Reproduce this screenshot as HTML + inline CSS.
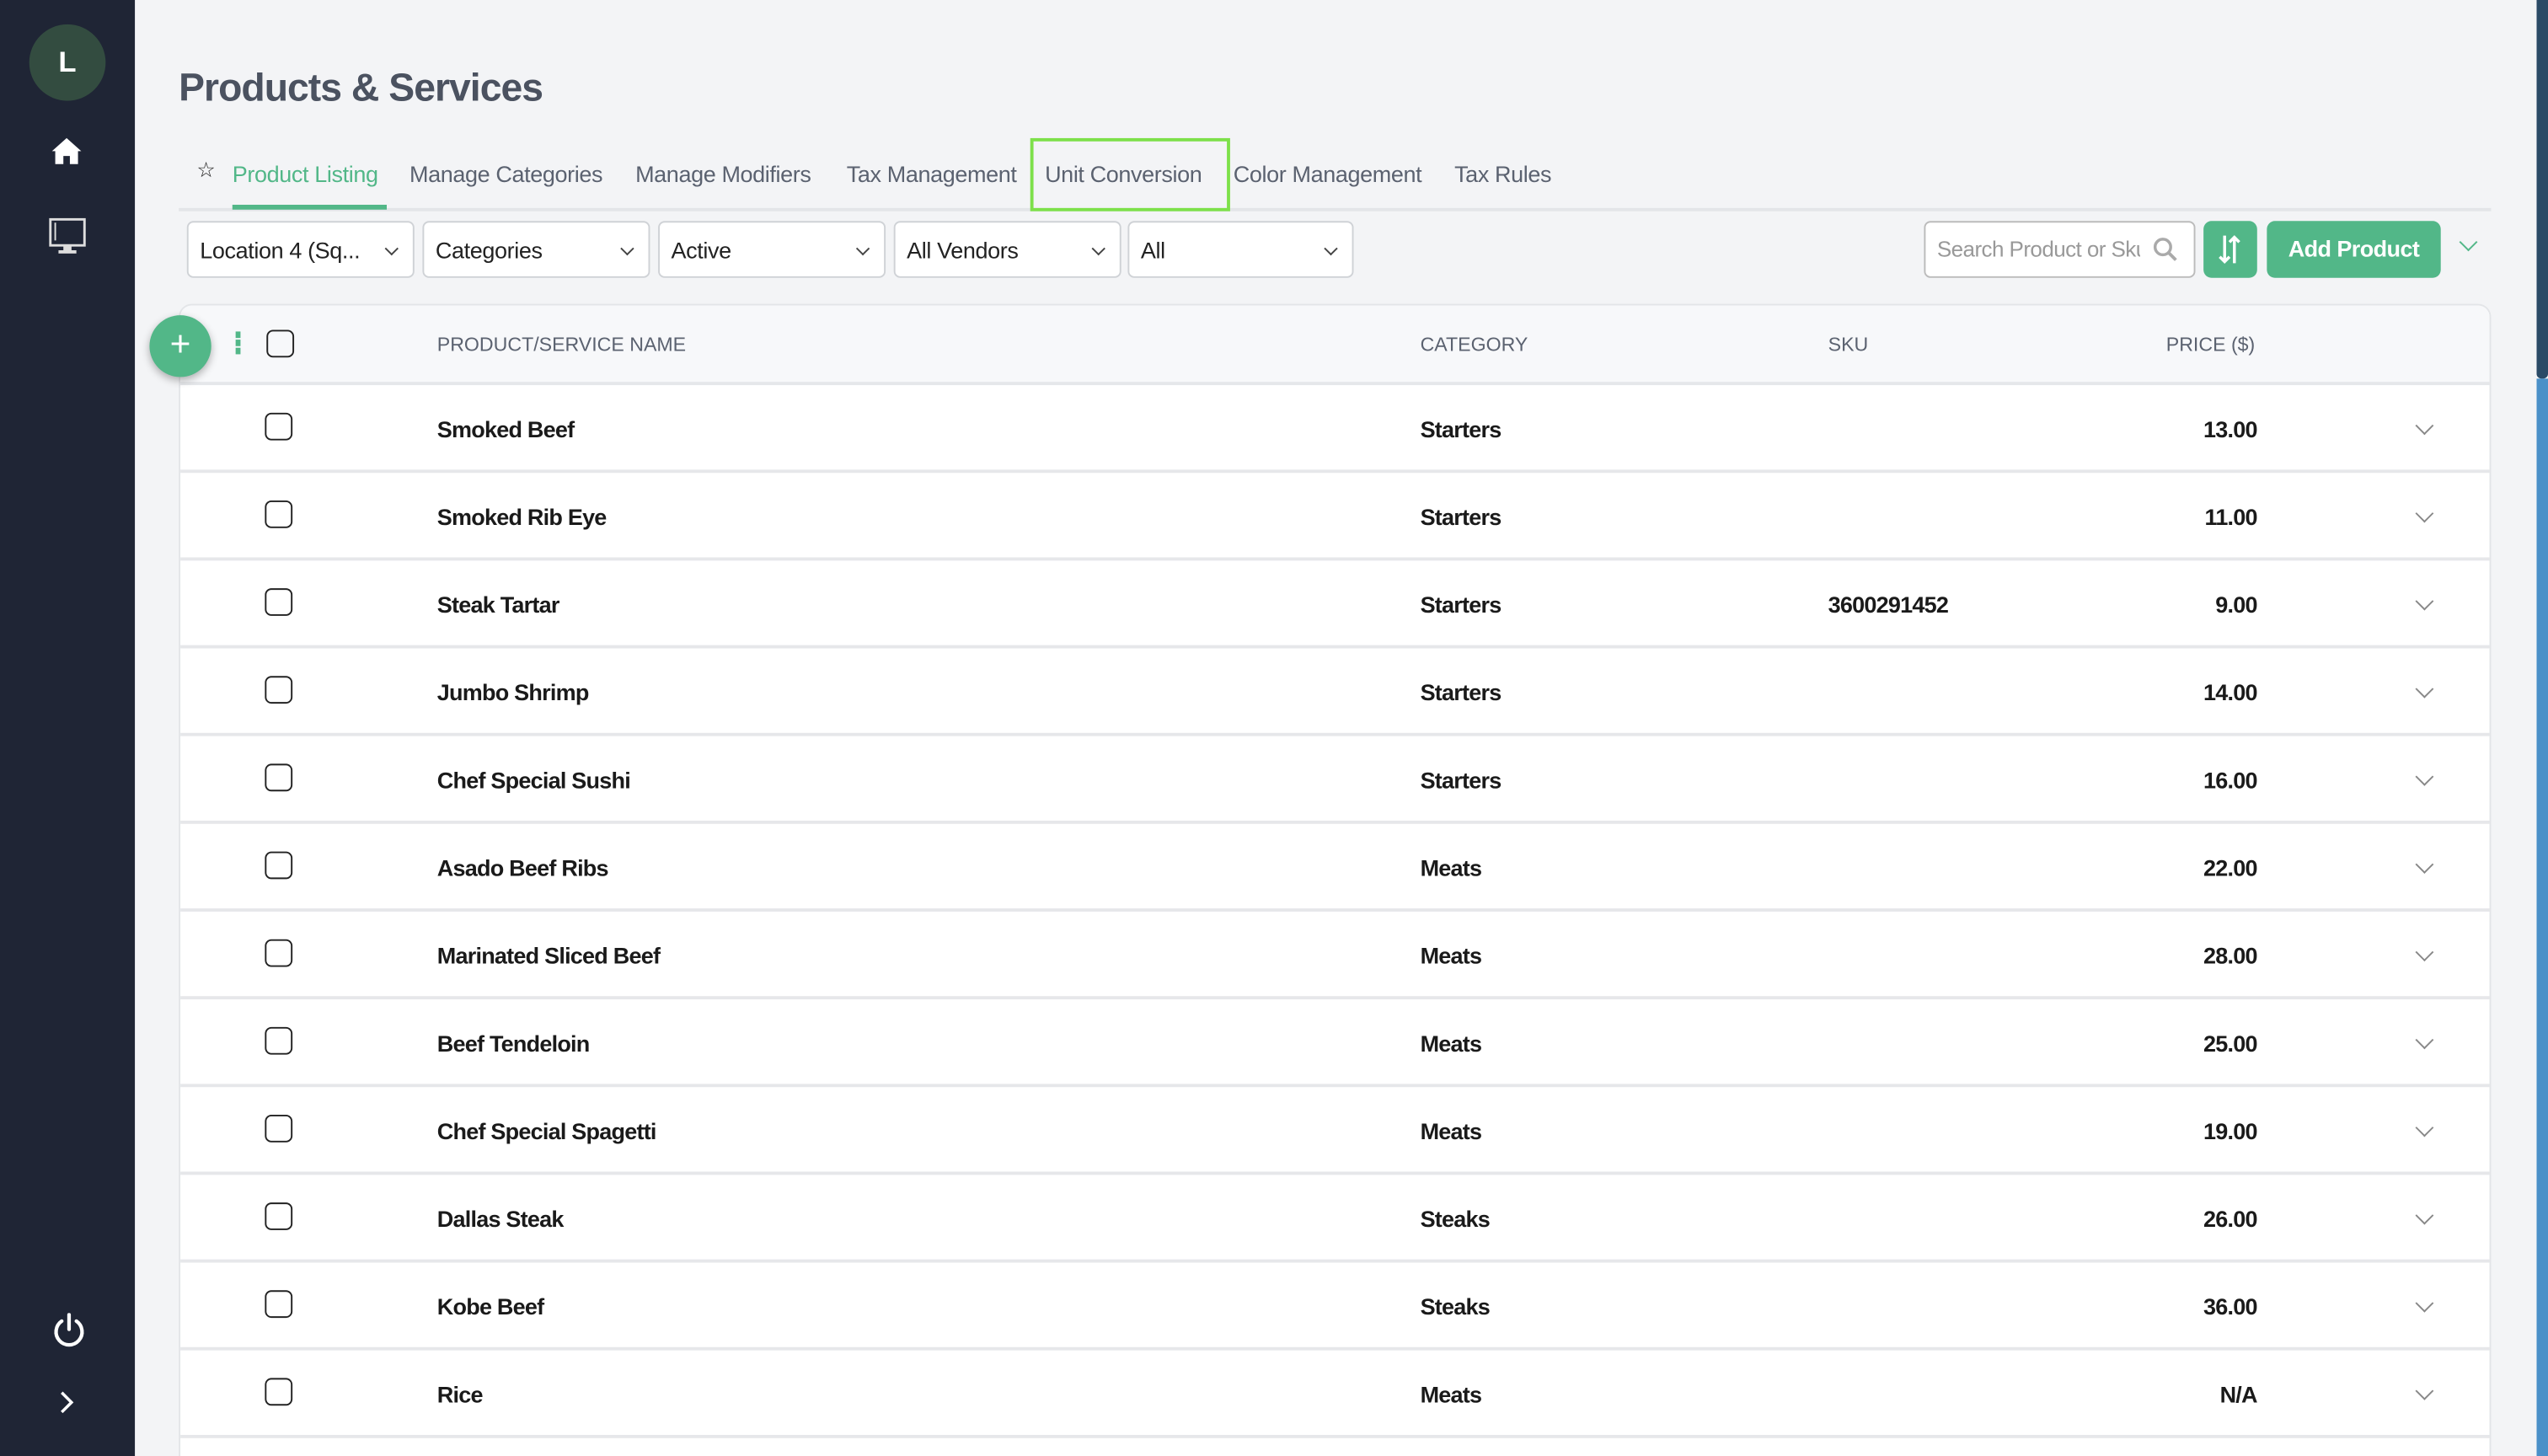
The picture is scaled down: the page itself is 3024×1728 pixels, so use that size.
<!DOCTYPE html>
<html><head><meta charset="utf-8"><style>
*{box-sizing:border-box;margin:0;padding:0}
html,body{width:3024px;height:1728px;overflow:hidden;background:#f3f4f6}
#w{position:absolute;left:0;top:0;width:1568px;height:896px;overflow:hidden;transform:scale(1.928571);transform-origin:0 0;font-family:"Liberation Sans",sans-serif;background:#f3f4f6}
.sb{position:absolute;left:0;top:0;width:83px;height:896px;background:#1f2535}
.av{position:absolute;left:18px;top:15px;width:47px;height:47px;border-radius:50%;background:#334c40;color:#fff;font-size:18px;font-weight:bold;text-align:center;line-height:47px}
h1{position:absolute;left:110px;top:41px;font-size:24px;color:#4b5260;font-weight:bold;letter-spacing:-0.5px}
.tabs{position:absolute;left:110px;top:96px;width:1423px;height:34px;border-bottom:2px solid #e3e5e8;font-size:14px;color:#5b6270;letter-spacing:-0.2px}
.tabs span{position:absolute;top:3px}
.sel{position:absolute;top:136px;height:35px;background:#fff;border:1px solid #cfd2d6;border-radius:4px;font-size:14px;color:#222;padding:9px 7px;letter-spacing:-0.2px}
.sel:after{content:"";position:absolute;right:10px;top:13px;width:5px;height:5px;border-right:1.3px solid #444;border-bottom:1.3px solid #444;transform:rotate(45deg)}
.tbl{position:absolute;left:110px;top:187px;width:1423px;height:720px;background:#fff;border:1px solid #e3e5e8;border-radius:8px 8px 0 0;overflow:hidden}
.hd{height:49px;background:#f7f8fa;border-bottom:2px solid #e5e7ea;position:relative;font-size:12px;color:#5b6270}
.hd span,.r span{position:absolute}
.r{height:54px;border-bottom:2px solid #e6e7ea;position:relative;font-size:14px;color:#1a1a1a;font-weight:bold;letter-spacing:-0.4px}
.cb{position:absolute;left:52px;width:17px;height:17px;border:1.5px solid #222;border-radius:4px}
.ch{position:absolute;left:1377px;top:21px;width:8px;height:8px;border-right:1.4px solid #888;border-bottom:1.4px solid #888;transform:rotate(45deg)}
</style></head><body><div id="w">
<div class="sb">
<div class="av">L</div>
<svg style="position:absolute;left:31px;top:84px" width="20" height="18" viewBox="0 0 20 18"><path d="M10 1 L1 9 L3 9 L3 17 L8 17 L8 12 L12 12 L12 17 L17 17 L17 9 L19 9 Z" fill="#fff"/></svg>
<svg style="position:absolute;left:30px;top:134px" width="23" height="24" viewBox="0 0 23 24"><rect x="1" y="1" width="21" height="16" fill="none" stroke="#ddd" stroke-width="1.5"/><line x1="4" y1="3" x2="4" y2="14" stroke="#ddd"/><rect x="9" y="17" width="5" height="3" fill="#ddd"/><rect x="6" y="20" width="11" height="2" fill="#ddd"/></svg>
<svg style="position:absolute;left:32px;top:808px" width="21" height="22" viewBox="0 0 21 22"><path d="M6 5 A8 8 0 1 0 15 5" fill="none" stroke="#fff" stroke-width="2.2" stroke-linecap="round"/><line x1="10.5" y1="1" x2="10.5" y2="10" stroke="#fff" stroke-width="2.2" stroke-linecap="round"/></svg>
<svg style="position:absolute;left:36px;top:856px" width="10" height="14" viewBox="0 0 10 14"><path d="M2 1 L8 7 L2 13" fill="none" stroke="#fff" stroke-width="1.8"/></svg>
</div>
<div style="position:absolute;right:0;top:0;width:7px;height:233px;background:#2a4a66;border-radius:0 0 3px 3px"></div>
<div style="position:absolute;right:0;top:233px;width:7px;height:663px;background:#4a90c8"></div>
<h1>Products &amp; Services</h1>
<div class="tabs">
<span style="left:11px;color:#222;font-size:13px;top:1px">☆</span>
<span style="left:33px;color:#52b788">Product Listing</span>
<div style="position:absolute;left:33px;top:30px;width:95px;height:3px;background:#52b788"></div>
<span style="left:142px">Manage Categories</span>
<span style="left:281px">Manage Modifiers</span>
<span style="left:411px">Tax Management</span>
<div style="position:absolute;left:524px;top:-11px;width:123px;height:45px;border:2px solid #7de04a"></div>
<span style="left:533px">Unit Conversion</span>
<span style="left:649px">Color Management</span>
<span style="left:785px">Tax Rules</span>
</div>
<div class="sel" style="left:115px;width:140px">Location 4 (Sq...</div>
<div class="sel" style="left:260px;width:140px">Categories</div>
<div class="sel" style="left:405px;width:140px">Active</div>
<div class="sel" style="left:550px;width:140px">All Vendors</div>
<div class="sel" style="left:694px;width:139px">All</div>
<div style="position:absolute;left:1184px;top:136px;width:167px;height:35px;background:#fff;border:1px solid #bbb;border-radius:4px;font-size:13.5px;color:#999;padding:9px 7px;overflow:hidden;white-space:nowrap;letter-spacing:-0.3px"><div style="width:125px;overflow:hidden">Search Product or Sku</div></div>
<svg style="position:absolute;left:1325px;top:146px" width="15" height="15" viewBox="0 0 15 15"><circle cx="6" cy="6" r="4.8" fill="none" stroke="#aaa" stroke-width="1.8"/><line x1="9.5" y1="9.5" x2="14" y2="14" stroke="#aaa" stroke-width="2"/></svg>
<div style="position:absolute;left:1356px;top:136px;width:33px;height:35px;background:#52b788;border-radius:5px"></div>
<svg style="position:absolute;left:1364px;top:144px" width="16" height="19" viewBox="0 0 16 19"><path d="M5 1 V17 M2 14 L5 17 L8 14 M11 18 V2 M8 5 L11 2 L14 5" fill="none" stroke="#fff" stroke-width="1.8"/></svg>
<div style="position:absolute;left:1395px;top:136px;width:107px;height:35px;background:#52b788;border-radius:5px;color:#fff;font-size:14px;font-weight:bold;text-align:center;line-height:35px;letter-spacing:-0.3px">Add Product</div>
<div style="position:absolute;left:1515px;top:145px;width:8px;height:8px;border-right:1.8px solid #52b788;border-bottom:1.8px solid #52b788;transform:rotate(45deg)"></div>
<div class="tbl">
<div class="hd">
<div style="position:absolute;left:34px;top:16px;width:3px;height:4px;background:#52b788;box-shadow:0 5px 0 #52b788,0 10px 0 #52b788"></div>
<div class="cb" style="top:15px;left:53px"></div>
<span style="left:158px;top:17px">PRODUCT/SERVICE NAME</span>
<span style="left:763px;top:17px">CATEGORY</span>
<span style="left:1014px;top:17px">SKU</span>
<span style="left:1222px;top:17px">PRICE ($)</span>
</div>
<div class="r"><div class="cb" style="top:17px"></div><span style="left:158px;top:19px">Smoked Beef</span><span style="left:763px;top:19px">Starters</span><span style="right:143px;top:19px">13.00</span><div class="ch"></div></div>
<div class="r"><div class="cb" style="top:17px"></div><span style="left:158px;top:19px">Smoked Rib Eye</span><span style="left:763px;top:19px">Starters</span><span style="right:143px;top:19px">11.00</span><div class="ch"></div></div>
<div class="r"><div class="cb" style="top:17px"></div><span style="left:158px;top:19px">Steak Tartar</span><span style="left:763px;top:19px">Starters</span><span style="left:1014px;top:19px">3600291452</span><span style="right:143px;top:19px">9.00</span><div class="ch"></div></div>
<div class="r"><div class="cb" style="top:17px"></div><span style="left:158px;top:19px">Jumbo Shrimp</span><span style="left:763px;top:19px">Starters</span><span style="right:143px;top:19px">14.00</span><div class="ch"></div></div>
<div class="r"><div class="cb" style="top:17px"></div><span style="left:158px;top:19px">Chef Special Sushi</span><span style="left:763px;top:19px">Starters</span><span style="right:143px;top:19px">16.00</span><div class="ch"></div></div>
<div class="r"><div class="cb" style="top:17px"></div><span style="left:158px;top:19px">Asado Beef Ribs</span><span style="left:763px;top:19px">Meats</span><span style="right:143px;top:19px">22.00</span><div class="ch"></div></div>
<div class="r"><div class="cb" style="top:17px"></div><span style="left:158px;top:19px">Marinated Sliced Beef</span><span style="left:763px;top:19px">Meats</span><span style="right:143px;top:19px">28.00</span><div class="ch"></div></div>
<div class="r"><div class="cb" style="top:17px"></div><span style="left:158px;top:19px">Beef Tendeloin</span><span style="left:763px;top:19px">Meats</span><span style="right:143px;top:19px">25.00</span><div class="ch"></div></div>
<div class="r"><div class="cb" style="top:17px"></div><span style="left:158px;top:19px">Chef Special Spagetti</span><span style="left:763px;top:19px">Meats</span><span style="right:143px;top:19px">19.00</span><div class="ch"></div></div>
<div class="r"><div class="cb" style="top:17px"></div><span style="left:158px;top:19px">Dallas Steak</span><span style="left:763px;top:19px">Steaks</span><span style="right:143px;top:19px">26.00</span><div class="ch"></div></div>
<div class="r"><div class="cb" style="top:17px"></div><span style="left:158px;top:19px">Kobe Beef</span><span style="left:763px;top:19px">Steaks</span><span style="right:143px;top:19px">36.00</span><div class="ch"></div></div>
<div class="r"><div class="cb" style="top:17px"></div><span style="left:158px;top:19px">Rice</span><span style="left:763px;top:19px">Meats</span><span style="right:143px;top:19px">N/A</span><div class="ch"></div></div>
</div>
<div style="position:absolute;left:92px;top:194px;width:38px;height:38px;border-radius:50%;background:#52b788;box-shadow:0 2px 5px rgba(0,0,0,.3);color:#fff;font-size:22px;text-align:center;line-height:36px">+</div>
</div></body></html>
